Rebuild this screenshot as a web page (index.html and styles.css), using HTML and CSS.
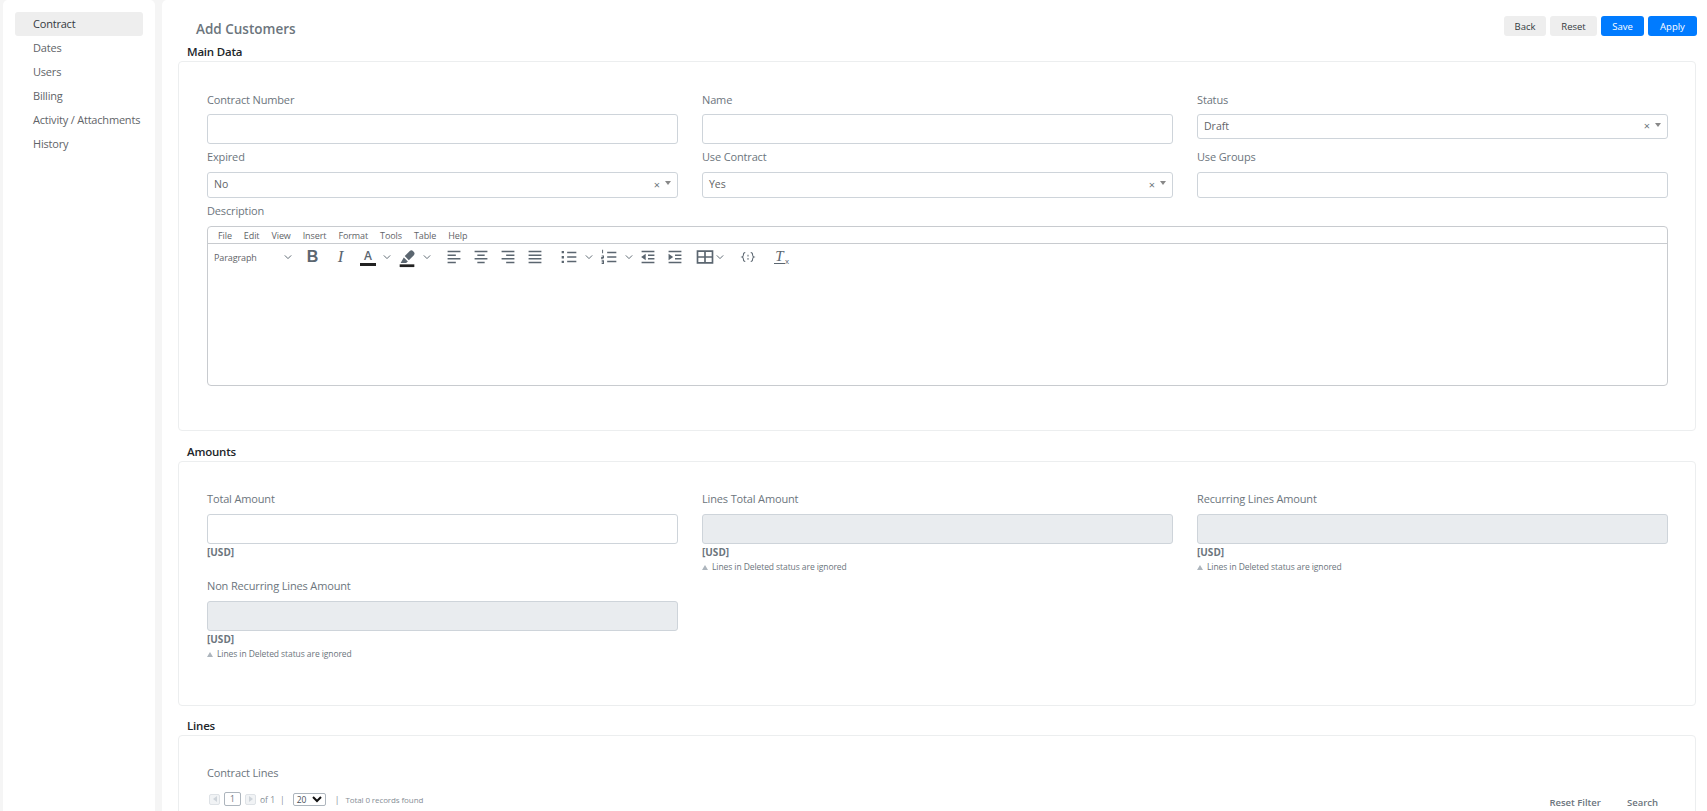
FILE: index.html
```html
<!DOCTYPE html>
<html lang="en">
<head>
    <meta charset="UTF-8">
    <meta name="viewport" content="width=device-width, initial-scale=1.0">
    <title>Add Customers</title>
    <link rel="stylesheet" href="styles.css">
</head>
<body>
    <div class="sidebar">
        <a class="side-link active">Contract</a>
        <a class="side-link">Dates</a>
        <a class="side-link">Users</a>
        <a class="side-link">Billing</a>
        <a class="side-link">Activity / Attachments</a>
        <a class="side-link">History</a>
    </div>
    <div class="main">
        <div class="page-header">
            <div class="page-title">Add Customers</div>
            <div class="actions">
                <button class="btn btn-light btn-back">Back</button>
                <button class="btn btn-light btn-reset">Reset</button>
                <button class="btn btn-blue btn-save">Save</button>
                <button class="btn btn-blue btn-apply">Apply</button>
            </div>
        </div>

        <div class="section-title">Main Data</div>
        <div class="card">
            <div class="form-grid">
                <div class="field field-top">
                    <label>Contract Number</label>
                    <div class="input"></div>
                </div>
                <div class="field field-top">
                    <label>Name</label>
                    <div class="input"></div>
                </div>
                <div class="field field-top">
                    <label>Status</label>
                    <div class="input select short"><span>Draft</span><span class="clear">×</span><span class="caret"></span></div>
                </div>
                <div class="field">
                    <label>Expired</label>
                    <div class="input select"><span>No</span><span class="clear">×</span><span class="caret"></span></div>
                </div>
                <div class="field">
                    <label>Use Contract</label>
                    <div class="input select"><span>Yes</span><span class="clear">×</span><span class="caret"></span></div>
                </div>
                <div class="field">
                    <label>Use Groups</label>
                    <div class="input select"></div>
                </div>
            </div>
            <div class="field description">
                <label>Description</label>
                <div class="editor">
                    <div class="menubar">
                        <span>File</span><span>Edit</span><span>View</span><span>Insert</span><span>Format</span><span>Tools</span><span>Table</span><span>Help</span>
                    </div>
                    <div class="toolbar">
                        <div class="tool-block">Paragraph</div>
                        <svg class="chev" viewBox="0 0 10 10"><path d="M1 3l4 4 4-4"/></svg>
                        <div class="tool tool-bold">B</div>
                        <div class="tool tool-italic">I</div>
                        <div class="tool tool-color">A</div>
                        <svg class="chev" viewBox="0 0 10 10"><path d="M1 3l4 4 4-4"/></svg>
                        <div class="tool tool-marker">
                            <svg class="icon" viewBox="0 0 24 24"><path class="solid" d="M9.500 11L15 5.500c1-1 2.500-1 3.500 0l1 1c1 1 1 2.500 0 3.500L14 15.500zM8.500 12.500l4.500 4.500-2 1.500H5z"/><path class="solid dark" d="M4 20h16v3H4z"/></svg>
                        </div>
                        <svg class="chev" viewBox="0 0 10 10"><path d="M1 3l4 4 4-4"/></svg>
                        <div class="tool first-align">
                            <svg class="icon" viewBox="0 0 24 24"><path d="M5 6h14M5 10h9M5 14h14M5 18h9"/></svg>
                        </div>
                        <div class="tool">
                            <svg class="icon" viewBox="0 0 24 24"><path d="M5 6h14M8 10h8M5 14h14M8 18h8"/></svg>
                        </div>
                        <div class="tool">
                            <svg class="icon" viewBox="0 0 24 24"><path d="M5 6h14M10 10h9M5 14h14M10 18h9"/></svg>
                        </div>
                        <div class="tool">
                            <svg class="icon" viewBox="0 0 24 24"><path d="M5 6h14M5 10h14M5 14h14M5 18h14"/></svg>
                        </div>
                        <div class="tool first-list">
                            <svg class="icon" viewBox="0 0 24 24"><path d="M10 7h10M10 12h10M10 17h10"/><path class="solid" d="M4 5.500h2.500V8H4zM4 11h2.500v2.500H4zM4 16h2.500v2.500H4z"/></svg>
                        </div>
                        <svg class="chev" viewBox="0 0 10 10"><path d="M1 3l4 4 4-4"/></svg>
                        <div class="tool tool-num">
                            <svg class="icon" viewBox="0 0 24 24"><path d="M10 7h10M10 12h10M10 17h10"/><path class="thin" d="M5 4v4M4 11h2v1.500H4V14h2M4 16h2v3H4M4 17.500h2"/></svg>
                        </div>
                        <svg class="chev" viewBox="0 0 10 10"><path d="M1 3l4 4 4-4"/></svg>
                        <div class="tool tool-outdent">
                            <svg class="icon" viewBox="0 0 24 24"><path d="M5 6h14M12 10h7M12 14h7M5 18h14"/><path class="solid" d="M9.500 8.500v7L4.500 12z"/></svg>
                        </div>
                        <div class="tool">
                            <svg class="icon" viewBox="0 0 24 24"><path d="M5 6h14M12 10h7M12 14h7M5 18h14"/><path class="solid" d="M5 8.500v7l5-3.500z"/></svg>
                        </div>
                        <div class="tool tool-table">
                            <svg class="icon" viewBox="0 0 24 24"><path class="thick" d="M3 5h18v14H3zM3 12h18M12 5v14"/></svg>
                        </div>
                        <svg class="chev" viewBox="0 0 10 10"><path d="M1 3l4 4 4-4"/></svg>
                        <div class="tool tool-code">
                            <svg class="icon" viewBox="0 0 24 24"><path class="thin" d="M9 7c-2 0-2 1-2 2.500s0 2-1.500 2.500c1.500.5 1.500 1 1.500 2.500s0 2.500 2 2.500M15 7c2 0 2 1 2 2.500s0 2 1.500 2.500c-1.500.5-1.500 1-1.500 2.500s0 2.500-2 2.500M12 9.500v2M12 13v2"/></svg>
                        </div>
                        <div class="tool tool-clear"><span class="clear-t">T</span><span class="clear-x">x</span></div>
                    </div>
                    <div class="editor-body"></div>
                </div>
            </div>
        </div>

        <div class="section-title">Amounts</div>
        <div class="card card-amounts">
            <div class="form-grid amounts">
                <div class="field">
                    <label>Total Amount</label>
                    <div class="input"></div>
                    <div class="unit">[USD]</div>
                </div>
                <div class="field">
                    <label>Lines Total Amount</label>
                    <div class="input disabled"></div>
                    <div class="unit">[USD]</div>
                    <div class="hint"><span class="hint-mark"></span>Lines in Deleted status are ignored</div>
                </div>
                <div class="field">
                    <label>Recurring Lines Amount</label>
                    <div class="input disabled"></div>
                    <div class="unit">[USD]</div>
                    <div class="hint"><span class="hint-mark"></span>Lines in Deleted status are ignored</div>
                </div>
                <div class="field">
                    <label>Non Recurring Lines Amount</label>
                    <div class="input disabled"></div>
                    <div class="unit">[USD]</div>
                    <div class="hint"><span class="hint-mark"></span>Lines in Deleted status are ignored</div>
                </div>
            </div>
        </div>

        <div class="section-title">Lines</div>
        <div class="card card-lines">
            <div class="field">
                <label>Contract Lines</label>
            </div>
            <div class="pager-row">
                <div class="pager">
                    <span class="page-nav"><span class="tri-left"></span></span>
                    <span class="page-box">1</span>
                    <span class="page-nav"><span class="tri-right"></span></span>
                    <span class="page-of">of 1</span>
                    <span class="sep">|</span>
                    <span class="page-size">20<svg class="size-chev" viewBox="0 0 10 10"><path d="M1 3l4 4 4-4"/></svg></span>
                    <span class="sep">|</span>
                    <span class="page-total">Total 0 records found</span>
                </div>
                <div class="grid-actions">
                    <a>Reset Filter</a>
                    <a>Search</a>
                </div>
            </div>
        </div>
    </div>
</body>
</html>
```

FILE: styles.css
```css
html, body {
    height: 100%;
    margin: 0;
    overflow: hidden;
}
body {
    display: flex;
    font-family: "Open Sans", "Noto Sans", Arial, sans-serif;
    font-size: 12px;
    color: #6c757d;
    background-color: #f5f5f5;
    padding-left: 3px;
    box-sizing: border-box;
}
.sidebar {
    width: 152px;
    flex-shrink: 0;
    background-color: #ffffff;
    border-radius: 5px 5px 0 0;
    padding: 12px 12px 0 12px;
    box-sizing: border-box;
}
.side-link {
    display: block;
    height: 24px;
    line-height: 24px;
    padding-left: 18px;
    font-size: 11px;
    letter-spacing: -0.2px;
    color: #5f6468;
    border-radius: 3px;
    white-space: nowrap;
}
.side-link.active {
    background-color: #eeeeee;
    color: #343a40;
}
.main {
    flex: 1;
    min-width: 0;
    margin-left: 7px;
    background-color: #ffffff;
    border-radius: 5px 0 0 0;
    padding: 0 11px 0 16px;
    overflow: hidden;
}
.page-header {
    height: 42px;
    display: flex;
    justify-content: space-between;
    padding: 16px 0 0 18px;
    box-sizing: border-box;
}
.page-title {
    font-size: 13.500px;
    font-weight: 600;
    line-height: 26px;
    color: #6c757d;
}
.actions {
    display: flex;
    gap: 4px;
    height: 20px;
    margin-right: -1px;
}
.btn {
    border: none;
    border-radius: 3px;
    font-family: inherit;
    font-size: 9.500px;
    padding: 0;
    height: 20px;
    cursor: pointer;
}
.btn-light {
    background-color: #eeeeee;
    color: #343a40;
}
.btn-blue {
    background-color: #007bff;
    color: #ffffff;
}
.btn-back {
    width: 42px;
}
.btn-reset {
    width: 47px;
}
.btn-save {
    width: 43px;
}
.btn-apply {
    width: 49px;
}
.section-title {
    font-size: 11.500px;
    font-weight: 600;
    letter-spacing: -0.2px;
    line-height: 19px;
    padding-left: 9px;
    color: #212529;
}
.card {
    border: 1px solid #eceeef;
    border-radius: 4px;
    padding: 28px 27px 44px 28px;
    margin-bottom: 11px;
}
.card-amounts {
    margin-bottom: 10px;
}
.form-grid {
    display: grid;
    grid-template-columns: repeat(3, 1fr);
    column-gap: 24px;
    row-gap: 4px;
    align-items: start;
}
.amounts {
    row-gap: 3px;
}
.field label {
    display: block;
    line-height: 18px;
    margin-bottom: 6px;
    font-size: 11px;
    letter-spacing: -0.15px;
    color: #6c757d;
}
.field-top label {
    padding-top: 1px;
    margin-bottom: 5px;
}
.input {
    height: 30px;
    box-sizing: border-box;
    border: 1px solid #ced4da;
    border-radius: 3px;
    background-color: #ffffff;
}
.select {
    height: 26px;
    display: flex;
    align-items: center;
    padding: 0 6px 2px 6px;
    font-size: 10.500px;
    color: #5f6468;
}
.select.short {
    height: 25px;
}
.clear {
    margin-left: auto;
    font-size: 11px;
    color: #6c757d;
}
.caret {
    margin-left: 5px;
    margin-bottom: 2px;
    border-left: 3px solid transparent;
    border-right: 3px solid transparent;
    border-top: 4px solid #888888;
}
.disabled {
    background-color: #e9ecef;
}
.unit {
    font-size: 10px;
    font-weight: 700;
    line-height: 16px;
    color: #6c757d;
}
.hint {
    display: flex;
    align-items: center;
    font-size: 8.500px;
    letter-spacing: -0.08px;
    line-height: 14px;
    color: #6c757d;
}
.hint-mark {
    border-left: 3px solid transparent;
    border-right: 3px solid transparent;
    border-bottom: 5px solid #adb5bd;
    margin-right: 4px;
}
.description {
    margin-top: 4px;
}
.editor {
    border: 1px solid #c8cbcf;
    border-radius: 4px;
    height: 160px;
    box-sizing: border-box;
}
.menubar {
    height: 16px;
    display: flex;
    align-items: center;
    padding-left: 4px;
    border-bottom: 1px solid #c8cbcf;
    font-size: 9px;
    letter-spacing: -0.1px;
    color: #5f6468;
}
.menubar span {
    padding: 0 6px;
}
.toolbar {
    height: 26px;
    display: flex;
    align-items: center;
    color: #5b6670;
}
.tool-block {
    width: 67px;
    padding-left: 6px;
    font-size: 9px;
    letter-spacing: -0.1px;
    color: #5f6468;
}
.chev {
    width: 14px;
    height: 14px;
    flex-shrink: 0;
    padding: 3px;
    box-sizing: border-box;
    fill: none;
    stroke: #5b6670;
    stroke-width: 1.200;
}
.tool {
    width: 27px;
    height: 24px;
    flex-shrink: 0;
    display: flex;
    align-items: center;
    justify-content: center;
}
.icon {
    width: 22px;
    height: 22px;
    fill: none;
    stroke: #5b6670;
    stroke-width: 1.600;
}
.icon .solid {
    fill: #5b6670;
    stroke: none;
}
.icon .dark {
    fill: #222222;
}
.icon .thin {
    stroke-width: 1.100;
}
.icon .thick {
    stroke-width: 2;
}
.tool-bold {
    margin-left: 4px;
    font-family: "Liberation Sans", Arial, sans-serif;
    font-size: 16px;
    font-weight: 700;
}
.tool-italic {
    margin-left: 1px;
    font-family: "Liberation Serif", serif;
    font-size: 17px;
    font-style: italic;
}
.tool-color {
    font-size: 12px;
    font-weight: 600;
    height: 15px;
    width: 16px;
    margin: 0 4px 0 6px;
    border-bottom: 3px solid #222222;
    line-height: 15px;
}
.tool-marker {
    margin-left: -1px;
}
.first-align {
    margin-left: 6px;
}
.first-list {
    margin-left: 7px;
}
.tool-num {
    margin-left: -1px;
}
.tool-outdent {
    margin-left: -2px;
}
.tool-table {
    margin-left: 7px;
    width: 20px;
}
.tool-table + .chev {
    margin-left: -2px;
}
.tool-code {
    margin-left: 7px;
}
.tool-clear {
    margin-left: 7px;
    height: 16px;
    align-items: flex-start;
}
.clear-t {
    font-family: "Liberation Serif", serif;
    font-size: 15px;
    font-style: italic;
    line-height: 14px;
    height: 14px;
    width: 11px;
    text-align: center;
    border-bottom: 1.500px solid #5b6670;
}
.clear-x {
    font-size: 8px;
    font-family: "Liberation Sans", Arial, sans-serif;
    line-height: 8px;
    margin-top: 9px;
}
.card-lines {
    height: 200px;
}
.pager-row {
    display: flex;
    justify-content: space-between;
    margin-top: 9px;
    padding-right: 10px;
}
.pager {
    display: flex;
    align-items: center;
    height: 16px;
    font-size: 8.500px;
    color: #868e96;
}
.page-nav {
    width: 11px;
    height: 11px;
    margin: 0 2px;
    box-sizing: border-box;
    border: 1px solid #dee2e6;
    border-radius: 2px;
    background-color: #f1f3f5;
    display: flex;
    align-items: center;
    justify-content: center;
}
.tri-left {
    border-top: 3px solid transparent;
    border-bottom: 3px solid transparent;
    border-right: 4px solid #ced4da;
}
.tri-right {
    border-top: 3px solid transparent;
    border-bottom: 3px solid transparent;
    border-left: 4px solid #ced4da;
}
.page-box {
    width: 17px;
    height: 14px;
    margin: 0 2px;
    box-sizing: border-box;
    border: 1px solid #adb5bd;
    border-radius: 2px;
    text-align: center;
    line-height: 12px;
    color: #6c757d;
}
.page-of {
    margin-left: 2px;
}
.sep {
    margin: 0 8px 0 5px;
}
.page-size + .sep {
    margin: 0 6px 0 9px;
}
.page-size {
    width: 33px;
    height: 13px;
    box-sizing: border-box;
    border: 1px solid #adb5bd;
    border-radius: 2px;
    display: flex;
    align-items: center;
    justify-content: space-between;
    padding: 0 3px;
    color: #495057;
}
.size-chev {
    width: 10px;
    height: 10px;
    fill: none;
    stroke: #111111;
    stroke-width: 2;
}
.page-total {
    font-size: 8px;
    letter-spacing: -0.1px;
    color: #868e96;
}
.grid-actions {
    display: flex;
    gap: 26px;
    margin-top: 5px;
    font-size: 9.500px;
    font-weight: 600;
    color: #6c757d;
}
```
